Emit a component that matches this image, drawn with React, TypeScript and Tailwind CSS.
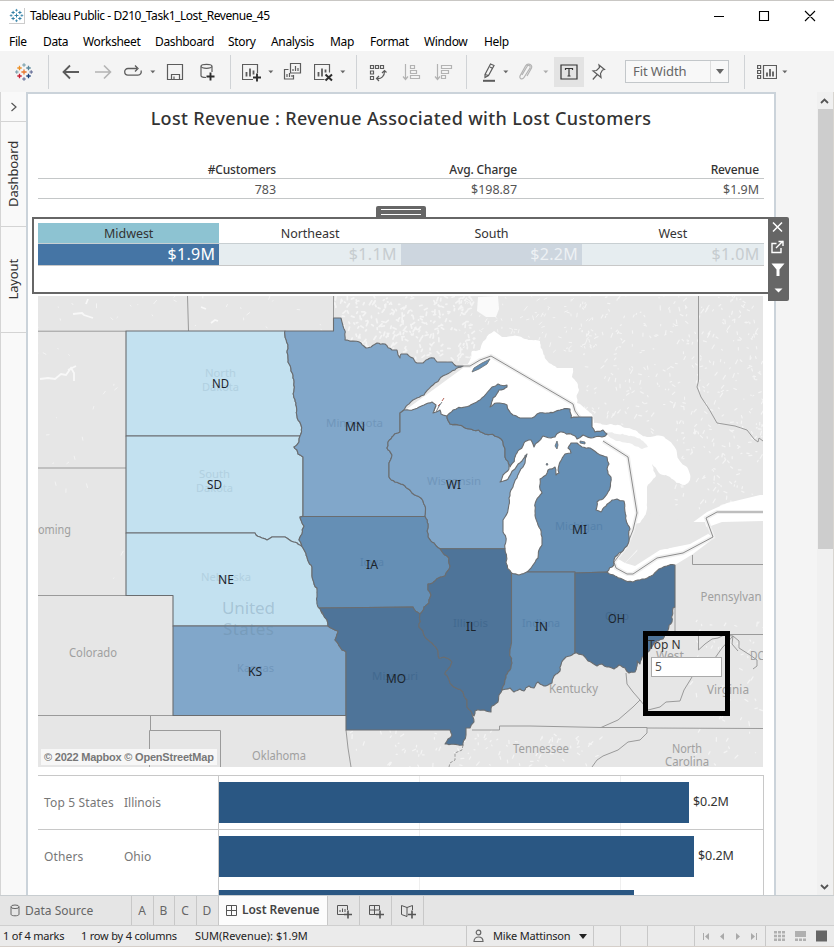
import React from "react";

type Kids = { children?: React.ReactNode; className?: string };

/* 20px toolbar glyph */
const Icon = ({ children, className = "" }: Kids) => (
  <svg width="20" height="20" viewBox="0 0 20 20" fill="none" stroke="#5c5c5c" strokeWidth="1.2" className={"shrink-0 " + className}>
    {children}
  </svg>
);

const Caret = ({ className = "" }: Kids) => (
  <svg width="6" height="4" viewBox="0 0 6 4" className={"shrink-0 " + className}>
    <path d="M0.3 0.5H5.3L2.8 3.3Z" fill="#666" />
  </svg>
);

const Sep = ({ className = "" }: Kids) => <div className={"h-[34px] w-px shrink-0 bg-[#d0d3d6] " + className} />;

const plus = (x: number, y: number, r: number) => `M${x - r} ${y}h${2 * r}M${x} ${y - r}v${2 * r}`;

function Logo({ size, mono }: { size: number; mono?: boolean }) {
  const c = mono
    ? ["#2f7fa5", "#2f7fa5", "#2f7fa5", "#2f7fa5", "#2f7fa5", "#2f7fa5", "#2f7fa5"]
    : ["#e8762d", "#eb9129", "#59879b", "#c72035", "#1f447e", "#5b6591", "#7099a6"];
  return (
    <svg width={size} height={size} viewBox="0 0 20 20" fill="none" className="shrink-0">
      <path d={plus(10, 10, 2.6)} stroke={c[0]} strokeWidth="1.3" />
      <path d={plus(5.5, 6, 2.2)} stroke={c[1]} strokeWidth="1.3" />
      <path d={plus(14.5, 6, 2.2)} stroke={c[2]} strokeWidth="1.3" />
      <path d={plus(5.5, 14, 2.2)} stroke={c[3]} strokeWidth="1.3" />
      <path d={plus(14.5, 14, 2.2)} stroke={c[4]} strokeWidth="1.3" />
      <path d={plus(10, 3, 1.8) + plus(2.8, 10, 1.8)} stroke={c[6]} strokeWidth="1" />
      <path d={plus(10, 17, 1.8) + plus(17.2, 10, 1.8)} stroke={c[5]} strokeWidth="1" />
    </svg>
  );
}

const menus: [string, string][] = [
  ["File", "w-[34px]"],
  ["Data", "w-[40px]"],
  ["Worksheet", "w-[72px]"],
  ["Dashboard", "w-[73px]"],
  ["Story", "w-[43px]"],
  ["Analysis", "w-[59px]"],
  ["Map", "w-[40px]"],
  ["Format", "w-[54px]"],
  ["Window", "w-[60px]"],
  ["Help", "w-[40px]"],
];

function TitleBar() {
  return (
    <div className="flex h-[31px] items-center border-t border-[#c9c7c4] bg-white pl-[9px] font-['Noto_Sans',sans-serif]">
      <div className="border-r border-b border-[#ccc]"><Logo size={15} mono /></div>
      <span className="ml-[5px] whitespace-nowrap text-[12px] tracking-[-0.450px] text-black">Tableau Public - D210_Task1_Lost_Revenue_45</span>
      <svg width="120" height="16" viewBox="0 0 120 16" fill="none" stroke="#000" strokeWidth="1.1" className="mr-[10px] ml-auto">
        <path d="M10 8.500h10M55.500 3.500h9v9h-9zM101 3l10 10M111 3l-10 10" />
      </svg>
    </div>
  );
}

function MenuBar() {
  return (
    <div className="flex h-[20px] items-center bg-white pt-[2px] pl-[9px] font-['Noto_Sans',sans-serif] text-[12px] tracking-[-0.350px] text-black">
      {menus.map(([m, w]) => (
        <span key={m} className={"shrink-0 " + w}>{m}</span>
      ))}
    </div>
  );
}

function Toolbar() {
  return (
    <div className="flex h-[41px] items-center bg-[#f4f4f4] pl-[14px]">
      <Logo size={20} />
      <Sep className="ml-[14px]" />
      <Icon className="ml-[12px]"><path d="M18 10H3M9 3.500L2.500 10L9 16.500" strokeWidth="1.8" /></Icon>
      <Icon className="ml-[12px]"><path d="M2 10H17M11 3.500L17.500 10L11 16.500" stroke="#b3b3b3" strokeWidth="1.6" /></Icon>
      <Icon className="ml-[10px]"><path d="M14 6.500H5a3.300 3.300 0 0 0 0 6.600h10a3.300 3.300 0 0 0 3-4.600M12 3.500L15 6.500L12 9.500" strokeWidth="1.3" /></Icon>
      <Caret className="ml-[7px]" />
      <Icon className="ml-[9px]"><path d="M2.500 2.500h15v15h-15zM6.500 17.500v-5h8v5M9 14.500v3" /></Icon>
      <Icon className="ml-[12px]">
        <path d="M9 15.500c-3 0-5-.8-5-2V4.500M15 10V4.500" />
        <ellipse cx="9.500" cy="4.300" rx="5.500" ry="2" />
        <path d="M9.500 14.500h8M13.500 10.500v8" stroke="#2e2e2e" strokeWidth="1.900" />
      </Icon>
      <Sep className="ml-[13px]" />
      <Icon className="ml-[11px]">
        <path d="M15.500 11V2.500h-15v15H11" />
        <path d="M4.500 14.500V10M8 14.500V6.500M11.500 12.500V8.500" strokeWidth="1.8" />
        <path d="M11 15.500h8M15 11.500v8" stroke="#2e2e2e" strokeWidth="1.900" />
      </Icon>
      <Caret className="ml-[6px]" />
      <Icon className="ml-[8px]">
        <path d="M8.500 1.500h10v9.500h-10zM6.500 7.500H2.500v9.500h9v-4" />
        <path d="M11 9V7M13.500 9V4M16 9V6M5 15v-3M7.500 15v-4M10 15v-2" />
      </Icon>
      <Icon className="ml-[12px]">
        <path d="M15.500 10.500V2.500h-15v15H10.500" />
        <path d="M4.500 14.500V10M8 14.500V6.500M11.500 10.500V7.500" strokeWidth="1.8" />
        <path d="M11.500 12.500l6.500 6M18 12.500l-6.500 6" stroke="#2e2e2e" strokeWidth="2" />
      </Icon>
      <Caret className="ml-[6px]" />
      <Sep className="ml-[10px]" />
      <Icon className="ml-[11px]">
        <path d="M2.500 3.500h3v3h-3zM7.500 3.500h3v3h-3zM12.500 3.500h3v3h-3zM2.500 9h3v3h-3zM2.500 14.500h3v3h-3z" />
        <path d="M9 16.500c4.500 .5 7.500-2.500 7.500-7M11 14L8.500 16.500L11 19M14 11l2.500-2.500l2 2" />
      </Icon>
      <Icon className="ml-[13px]"><path d="M4.500 2v15M2 14.500l2.500 3l2.500-3M9.500 3.500h4v3h-4zM9.500 8.500h6v3h-6zM9.500 13.500h9v3h-9z" stroke="#b3b3b3" /></Icon>
      <Icon className="ml-[12px]"><path d="M4.500 2v15M2 14.500l2.500 3l2.500-3M8.500 3.500h10v3h-10zM8.500 8.500h7v3h-7zM8.500 13.500h4v3h-4z" stroke="#b3b3b3" /></Icon>
      <Sep className="ml-[13px]" />
      <Icon className="ml-[12px]"><path d="M6 12.500L11.500 2l3.500 1.500L9.500 13.500L6 15.500zM6 12.500l3.500 1M11 5l2.500 1.300" /><path d="M4 18.800h12" strokeWidth="2" /></Icon>
      <Caret className="ml-[4px]" />
      <Icon className="ml-[7px]"><path d="M6 13l5-8.500c1-2 4-1 3 1.500l-6 9.500c-1.500 2.500-5 1.500-4-1.500l5.500-10c2-3.500 7.500-1.500 6 2L11 14" stroke="#b3b3b3" /></Icon>
      <Caret className="ml-[7px] opacity-50" />
      <div className="ml-[5px] flex h-[30px] w-[30px] shrink-0 items-center justify-center bg-[#e3e3e3]">
        <svg width="18" height="16" viewBox="0 0 18 16" fill="none" stroke="#333" strokeWidth="1.200">
          <path d="M1 1h16v14H1zM5.500 6V4.500h7V6M9 4.500v7.500M7.500 12h3" />
        </svg>
      </div>
      <Icon className="ml-[4px]"><path d="M11 3l5.500 4.500l-2 .5l-2 3.500l.5 4L9.500 12.500L5 9l3.500-.5l3-3zM9.300 12.500l-4.500 5" /></Icon>
      <div className="ml-[17px] flex h-[23px] w-[104px] shrink-0 items-center border border-[#c3c7ca] bg-[#f8f8f8]">
        <span className="w-[84px] pl-[7px] font-['Noto_Sans',sans-serif] text-[13px] tracking-[-0.100px] text-[#666]">Fit Width</span>
        <div className="flex h-full flex-1 items-center justify-center border-l border-[#ddd]">
          <svg width="8" height="5" viewBox="0 0 8 5"><path d="M0 0h8L4 5z" fill="#666" /></svg>
        </div>
      </div>
      <Sep className="ml-[15px]" />
      <Icon className="ml-[12px]">
        <path d="M.6 3.500h3v3h-3zM.6 8.500h3v3h-3zM.6 13.500h3v3h-3zM6.500 3.500h13v13h-13z" />
        <path d="M10 14.500v-4M13 14.500V7M16 14.500v-5" strokeWidth="1.800" />
      </Icon>
      <Caret className="ml-[5px]" />
    </div>
  );
}

const A = "#c3e1f0";
const B = "#81a7ca";
const C = "#658fb5";
const D = "#4e7499";

const states: [string, string][] = [
  [A, "126,331 285,331 288,345 287,352 288,362 291,371 293,378 294,390 296,403 297,416 301,425 300,436 126,436"],
  [A, "126,436 300,436 299,442 294,447 298,454 303,457 303,516 300,517 304,526 302,534 299,540 303,548 297,543 291,541 285,537 272,537 267,540 262,538 255,533 126,533"],
  [A, "126,533 255,533 262,538 267,540 272,537 285,537 291,541 297,543 303,548 307,557 312,567 312,576 317,588 318,600 321,611 327,620 328,626 173,626 173,595.5 126,595.5"],
  [B, "173,626 328,626 333,629 338,631 335,640 340,647 342,650 346,652 346,715.500 173,715.500"],
  [B, "285,331 333.500,331 333.500,318 341,318 343,326 345,340 353,341 361,343 366,348 371,347 377,343 385,344 392,350 397,350 400,358 401,354 407,354 413,358 417,363 423,363 426,360 434,358 437,362 452,362 456,366 463,366 455,370 445,375 433,385 424,395 413,400 404,410 400,413 400,432 392,437 388,442 387,448 392,455 389,463 389,477 395,482 405,486 412,493 423,501 425,516.500 303,516.500 303,457 298,454 294,447 299,442 300,436 301,425 297,416 296,403 294,390 293,378 291,371 288,362 287,352 288,345"],
  [B, "404,410 415,409 424,405 432,402 436,405 433,413 440,410 441,414 447,416 450,424 470,429 485,434 498,437 503,442 505,449 505,457 509,463 509,469 503,475 500,482 508,479 515,469 522,461 527,454 524,465 517,478 513,487 509,498 508,510 503,520 503,532 506,541 505,548.700 440,548.700 434,543 428,537 427,531 428,524 425,516.500 423,501 412,493 405,486 395,482 389,477 389,463 392,455 387,448 388,442 392,437 400,432 400,413"],
  [C, "447,416 453,410 465,407 480,400 486,394 492,387 498,384 507,385 507,387 499,390 493,398 490,407 497,403 507,405 513,415 520,418 532,418 537,414 547,413 560,410 570,409 571,418 580,417 592,417 592,427 595,432 603,430 607,434 602,437 583,435 577,439 571,434 560,432 555,437 543,436 538,442 534,447 531,440 524,443 517,453 510,467 505,457 505,449 503,442 498,437 485,434 470,429 450,424"],
  [C, "527,572 533,565 538,558 542,545 542,537 538,525 535,511 536,501 542,493 540,479 546,475 548,470 555,467 556,475 559,473 560,462 565,454 571,453 568,448 571,443 577,443 582,447 590,448 597,453 607,457 609,464 607,469 611,477 610,488 607,494 603,499 597,502 596,510 601,512 606,506 612,500 617,499 624,501 626,516 630,529 629,540 627,546 619,553 615,557 614,565 607,572 575,573 575,572"],
  [C, "303,516.500 425,516.500 428,524 427,531 428,537 434,543 440,548.700 443,553 449,558 450,566 445,576 435,581 428,584 428,590 431,595 429,603 424,607 420,614 413,607 319,608 317,597 317,588 312,576 312,567 307,557 303,548 299,540 302,534 304,526 300,517"],
  [D, "319,608 413,607 420,614 419,627 425,637 432,643 437,649 439,658 444,657 452,662 450,667 445,674 450,683 456,688 463,692 467,700 467,707 472,713 474,722 470,728 466,728 466,735 463,745 445,744 448,739 452,735 450,730 346,730 346,652 342,650 340,647 335,640 338,631 333,629 328,626 327,620"],
  [D, "440,548.700 505,548.700 506,562 511.500,573 511.500,643 510,650 512,663 508,672 505,680 502,690 499,695 498,702 492,706 491,712 486,711 482,710 475,711 474,716 472,713 467,707 467,700 463,692 456,688 450,683 445,674 450,667 452,662 444,657 439,658 437,649 432,643 425,637 419,627 420,614 424,607 429,603 431,595 428,590 428,584 435,581 445,576 450,566 449,558 443,553"],
  [C, "511.500,573 519,575 527,572 575,572 575,653 572,655 566,657 561,665 560,671 554,676 552,683 548,685 544,686 538,682 534,688 529,686 524,691 520,689 514,692 510,688 502,690 505,680 508,672 512,663 510,650 511.500,643"],
  [D, "575,573 607,572 615,576 622,579 633,582 645,579 651,576 659,569 675,565 675,607 673,608 672,622 668,630 663,639 653,645 648,652 642,657 640,664 637,661 635,672 629,673 625,668 619,665 614,669 607,667 602,664 597,666 588,661 583,655 577,653 575,653"],
];

/* Adds small bends to natural borders. The offset depends only on the two
   end points together, so states that share a border stay flush. */
function roughen(points: string) {
  const p = points.split(" ").map((q) => q.split(",").map(Number));
  const bend = (a: number[], b: number[]): number[][] => {
    const dx = b[0] - a[0];
    const dy = b[1] - a[1];
    const len = Math.hypot(dx, dy);
    if (dx === 0 || dy === 0 || len < 3.5 || len > 30) return [];
    const s = a[0] + b[0];
    const t = a[1] + b[1];
    const k = len * 0.1;
    const m = [s / 2 + Math.sin(s * 12.9 + t * 7.3) * k, t / 2 + Math.cos(s * 5.1 + t * 9.7) * k];
    return [...bend(a, m), m, ...bend(m, b)];
  };
  return p
    .flatMap((a, i) => [a, ...bend(a, p[(i + 1) % p.length])])
    .map((q) => q[0].toFixed(1) + "," + q[1].toFixed(1))
    .join(" ");
}

/* small lakes scattered over the base map */
function speckle(seed: number, n: number, x0: number, y0: number, w: number, h: number) {
  let s = seed;
  const r = () => {
    s = (s * 16807) % 2147483647;
    return s / 2147483647;
  };
  let d = "";
  for (let i = 0; i < n; i++) {
    const x = x0 + r() * w;
    const y = y0 + r() * h;
    d += `M${x.toFixed(1)} ${y.toFixed(1)}l${(r() * 4 - 1).toFixed(1)} ${(r() * 6 - 4).toFixed(1)}`;
  }
  return d;
}

const baseLabels: [string, number, number, number][] = [
  ["oming", 38, 534, 33],
  ["Colorado", 69, 657, 48],
  ["Oklahoma", 252, 759.5, 54],
  ["Kentucky", 549, 693, 49],
  ["Tennessee", 513, 752.5, 56],
  ["North", 672, 752.5, 30],
  ["Carolina", 665, 766, 44],
  ["Virginia", 707, 693.5, 42],
  ["Pennsylvan", 700.5, 600.5, 61],
  ["West", 656, 660, 28],
  ["DC", 750, 660, 14],
];

const faintLabels: [string, number, number, number, string][] = [
  ["North", 205, 377, 31, "#b1d0e0"],
  ["Dakota", 202, 391, 37, "#b1d0e0"],
  ["South", 199, 478, 31, "#b1d0e0"],
  ["Dakota", 196, 492, 37, "#b1d0e0"],
  ["Nebraska", 201, 581, 50, "#b1d0e0"],
  ["Kansas", 237, 672, 37, "#7096ba"],
  ["Minnesota", 326, 427, 57, "#7096ba"],
  ["Wisconsin", 427, 485, 54, "#7096ba"],
  ["Iowa", 360, 566, 24, "#5682ab"],
  ["Missouri", 372, 679.5, 46, "#42698f"],
  ["Illinois", 453, 627, 35, "#42698f"],
  ["Indiana", 522, 627, 38, "#5682ab"],
  ["Michigan", 555, 530, 48, "#5682ab"],
  ["Ohio", 605, 620, 24, "#42698f"],
];

const codes: [string, number, number, number][] = [
  ["ND", 212, 388, 17],
  ["SD", 207, 489, 15],
  ["NE", 218, 584, 16],
  ["KS", 248, 676, 14],
  ["MN", 345, 431, 20],
  ["WI", 446, 489, 15],
  ["IA", 366, 569, 12],
  ["MO", 386, 683, 20],
  ["IL", 466, 631, 10],
  ["IN", 535, 631, 13],
  ["MI", 572, 534, 15],
  ["OH", 608, 623, 17],
];

const usCanada = "463,366 470,366 480,360 491,356 573,404 575,411 580,418";
const huronErie = "603,441 628,457 637,513 633,530 627,545 614,562 616,568 627,574 633,574 657,558 683,553 713,537 709,526 706,518 717,512 763,512";

function LostRevenueMap() {
  return (
    <svg width="725" height="471" viewBox="38 296 725 471" className="block bg-[#e6e6e6] font-['Noto_Sans',sans-serif] text-[12px]">
      <g fill="none" stroke="#f4f4f4" strokeLinecap="round">
        <path d={speckle(77, 300, 335, 296, 140, 70)} strokeWidth="1.700" />
        <path d={speckle(12, 110, 460, 296, 130, 60)} strokeWidth="1" />
        <path d={speckle(31, 330, 580, 296, 183, 140)} strokeWidth="1.100" />
        <path d={speckle(59, 100, 675, 420, 88, 90)} strokeWidth="1.200" />
        <path d={speckle(45, 25, 38, 296, 290, 34)} strokeWidth="1" />
        <path d={speckle(8, 20, 38, 340, 85, 250)} strokeWidth="0.900" />
        <path d={speckle(99, 90, 350, 732, 250, 35)} strokeWidth="1.200" />
        <path d={speckle(201, 60, 690, 620, 73, 147)} strokeWidth="1.200" />
      </g>
      <path d="M40 379l8-1l7 1l6-5l5 1l5-7l3 5v8M68 370l8-4M73 314l9-1l2 2l9 3M86 304l2-5M211 323l4-3l3 1M201 307l5 2" stroke="#f8f8f8" strokeWidth="1.800" fill="none" />
      <path d="M478 297l20-1l1 13l-3 8l-10 0l-9-6z" fill="#fafafa" />
      {/* Great Lakes */}
      <g fill="#fff">
        <path d={"M" + roughen("463,368 470,360 472,351 480,350 485,340 494,331 502,337 513,336 525,339 540,341 543,352 549,363 557,368 573,368 572,377 579,390 577,403 592,414 594,423 610,424 627,428 647,437 662,436 673,445 687,467 690,480 685,485 670,477 657,470 652,464 656,476 647,487 647,502 640,523 630,530 619,553 590,545").split(" ").join("L") + "L500 585L500 450L440 420L400 414Z"} />
        <path d="M607 572L615 557L625 563L637 550L650 546L667 549L690 540L703 530L714 538L693 554L675 565L660 580L620 584Z" />
        <path d="M692 523L707 512L727 503L760 495L763 495V521L722 522L708 527Z" />
      </g>
      <path d="M625 563L637 551L640 543L639 526L647 513L690 522L705 522L708 534L690 544L660 550L635 566Z" fill="#e6e6e6" />
      <path d={"M" + roughen("606,432 617,434 629,436 643,441 648,447 642,449 629,443 613,439").split(" ").join("L") + "Z"} fill="#ececec" />
      <g fill="none" stroke="#f0f0f0" strokeWidth="4"><polyline points={usCanada} /><polyline points={huronErie} /></g>
      {/* outlines of the neighbouring states and provinces */}
      <g fill="none" stroke="#9a9a9a" strokeWidth="1">
        <path d="M187.500 296L188.500 331M38 331.200H126M38 468H126M38 595.500H126M38 715.500H173M150.500 716V730M149.500 767V730.500H220.500V767M333.500 296V331" />
        <path d="M346 730L348 748L351 767M472 730H499.500V726H530L601 727.500H647V733L640 740L628 742L618 750L603 756L597 760L592 767M647 728L763 728.500" />
        <path d="M601 727.500L618 720L633 707L640 700L648 710L660 707L666 702L680 701L684 690L692 677L697 670L708 665L715 658L722 648L733 636" />
        <path d="M626 673L627 684L633 692L640 700M675 607V634.500H763M692.500 555V564.500H763M698.500 636V650L705 644L712 639L718 638L724 635L733 636L739 641L739 648L750 655L757 660L757 666L753 669M733 636L732 644L738 651" />
        <path d="M698.500 296V381L697 387L701 397L709 409L717 423L735 426L747 430L754 439L758 442L759 438L763 441" />
        <path d="M463 745L462 750L455 753L455 760L450 763L449 767" strokeDasharray="3 1.500" />
        <polyline points={usCanada} stroke="#8c8c8c" />
        <polyline points={huronErie} stroke="#8c8c8c" />
      </g>
      <g stroke="#6a6d70" strokeWidth="1.100" strokeLinejoin="round">
        {states.map(([fill, pts], i) => <polygon key={i} points={roughen(pts)} fill={fill} />)}
      </g>
      {/* islands */}
      <g fill={C} stroke="#6a6d70" strokeWidth="0.800">
        <path d="M472 372L474 368L482 363L490 359L487 364L479 369Z" />
        <path d="M557 441l1 4l-1 4l-2-3zM547 463l1 2l-2 0zM525 455l2 1l-2 1zM580 441l5 1l0 2l-5-1zM436 412l3-6l3-4M434 411l2-5" />
      </g>
      <path d="M438 406l2-2M442 401l2-3" stroke="#b5655a" fill="none" />
      <g fill="#a0a0a0">
        {baseLabels.map(([t, x, y, w]) => <text key={t} x={x} y={y} textLength={w} lengthAdjust="spacingAndGlyphs">{t}</text>)}
      </g>
      <g fontSize="11.500">
        {faintLabels.map(([t, x, y, w, c], i) => <text key={i} x={x} y={y} fill={c} textLength={w} lengthAdjust="spacingAndGlyphs">{t}</text>)}
      </g>
      <g fontSize="17" fill="#5f8098" fillOpacity="0.300">
        <text x="222" y="614" textLength="53">United</text>
        <text x="223" y="635" textLength="51">States</text>
      </g>
      <g fontSize="13" fill="#1c242c">
        {codes.map(([t, x, y, w]) => <text key={t} x={x} y={y} textLength={w} lengthAdjust="spacingAndGlyphs">{t}</text>)}
      </g>
    </svg>
  );
}

const regions: [string, string, string, string][] = [
  ["Midwest", "$1.9M", "bg-[#8dc3d2]", "bg-[#4575a5] text-white"],
  ["Northeast", "$1.1M", "", "bg-[#e6edf0] text-[#c6cccf]"],
  ["South", "$2.2M", "", "bg-[#cdd6df] text-[#edf1f4]"],
  ["West", "$1.0M", "", "bg-[#e6edf0] text-[#c6cccf]"],
];

function SelectedZone() {
  return (
    <div className="relative ml-[-6px] h-[77px] w-[738px] border-2 border-[#666] pt-1 pl-1">
      <div className="flex w-[726px] border-b border-[#c8c8c8]">
        {regions.map(([name, val, head, cell]) => (
          <div key={name} className="w-[181.400px] shrink-0">
            <div className={"h-[21px] border-b border-[#c8cfd2] text-center text-[12.500px] leading-[21px] tracking-[-0.050px] text-[#333] " + head}>{name}</div>
            <div className={"h-[21px] pr-[4px] text-right text-[16px] leading-[21px] tracking-[0.350px] " + cell}>{val}</div>
          </div>
        ))}
      </div>
      <div className="absolute top-[-13px] left-[342px] flex h-[12px] w-[50px] flex-col gap-[4px] rounded-t-[2px] bg-[#666] px-[5px] pt-[3px]">
        <div className="h-px bg-white" />
        <div className="h-px bg-white" />
      </div>
      <div className="absolute top-[-2px] left-[734px] h-[84px] w-[21px] rounded-r-[2px] bg-[#666]">
        <svg width="21" height="84" viewBox="0 0 21 84" fill="none" stroke="#fff" strokeWidth="1.500">
          <path d="M5 5.500l9 9M14 5.500l-9 9" />
          <path d="M8.500 26.500h-4.500v9h9v-4.500M8 31l7-7M10.500 24.500h4.500v4.500" strokeWidth="1.400" />
          <path d="M3.500 46.500h13l-5 6v6.500h-3v-6.500z" fill="#fff" stroke="none" />
          <path d="M6.500 71.500h8l-4 4z" fill="#fff" stroke="none" />
        </svg>
      </div>
    </div>
  );
}

const bars: [string, string, string, string][] = [
  ["Top 5 States", "Illinois", "w-[470px]", "$0.2M"],
  ["Others", "Ohio", "w-[475px]", "$0.2M"],
];

function BarChart() {
  return (
    <div className="relative mt-[8px] flex h-[120px] w-[726px] flex-col overflow-hidden border-t border-r border-[#c8c8c8]">
      {/* value gridlines behind the bars */}
      <div className="absolute inset-y-0 left-[381px] w-[202px] border-x border-[#efefef]" />
      {bars.map(([group, state, w, v], i) => (
        <div key={state} className={"relative flex shrink-0 items-center text-[12px] " + (i === 0 ? "h-[54px] border-b border-[#c8c8c8]" : "h-[53px]")}>
          <span className="w-[80px] pl-[6px] tracking-[0.150px] whitespace-nowrap text-[#777]">{group}</span>
          <span className="w-[100px] pl-[6px] text-[#777]">{state}</span>
          <div className="flex h-full flex-1 items-center border-l border-[#c8c8c8]">
            <div className={"h-[41px] bg-[#2a5783] " + w} />
            <span className="pl-[4px] text-[12.500px] tracking-[-0.050px] text-[#333]">{v}</span>
          </div>
        </div>
      ))}
      <div className="relative flex h-[13px] shrink-0 pl-[180px]">
        <div className="h-full flex-1 border-l border-[#c8c8c8] pt-[7px]">
          <div className="h-[10px] w-[415px] bg-[#2a5783]" />
        </div>
      </div>
    </div>
  );
}

function Dashboard() {
  return (
    <div className="h-[803px] w-[750px] shrink-0 overflow-visible border-x-2 border-t-2 border-[#cbd3da] bg-white pl-[10px] font-['Noto_Sans',sans-serif]">
      <div className="flex h-[48px] w-[726px] items-center justify-center whitespace-nowrap text-[18px] font-medium tracking-[0.360px] text-[#333]">
        Lost Revenue : Revenue Associated with Lost Customers
      </div>
      <div className="mt-[16px] grid w-[726px] grid-cols-[238px_241px_242px_5px] text-right text-[12px] text-[#333]">
        <div className="col-span-4 grid h-[21px] grid-cols-subgrid items-center border-b border-[#c4c7c8] pt-[3px] font-medium tracking-[-0.150px]">
          <span>#Customers</span><span>Avg. Charge</span><span>Revenue</span>
        </div>
        <div className="col-span-4 grid h-[20px] grid-cols-subgrid items-center border-b border-[#c4c7c8] pt-[2px] text-[12.500px] tracking-[-0.050px] text-[#555]">
          <span>783</span><span>$198.87</span><span>$1.9M</span>
        </div>
      </div>
      <div className="h-[18px]" />
      <SelectedZone />
      <div className="relative mt-[2px] h-[471px] w-[725px]">
        <LostRevenueMap />
        <div className="absolute bottom-[2px] left-[3px] h-[16px] bg-[#f7f7f7] px-[3px] font-['Liberation_Sans',sans-serif] text-[11px] leading-[16px] font-bold tracking-[-0.210px] whitespace-nowrap text-[#777]">
          © 2022 Mapbox © OpenStreetMap
        </div>
        <div className="absolute top-[335px] left-[605px] h-[85px] w-[87px] border-[5px] border-black">
          <div className="h-[21px] pt-px text-[12px] leading-[16px] text-[#333]">Top N</div>
          <div className="ml-[3px] h-[20px] w-[71px] border border-[#aaa] bg-white pl-[3px] text-[12px] leading-[18px] text-[#555]">5</div>
        </div>
      </div>
      <BarChart />
    </div>
  );
}

function SidePane() {
  return (
    <div className="flex w-[26px] shrink-0 flex-col border-l border-[#d5d5d5] bg-[#f9f9f9] font-['Noto_Sans',sans-serif] text-[13px] tracking-[-0.150px] text-[#333]">
      <div className="flex h-[30px] items-center justify-center border-b border-[#d4d4d4]">
        <svg width="8" height="10" viewBox="0 0 8 10" fill="none" stroke="#555" strokeWidth="1.200"><path d="M1.500 1L6 5L1.500 9" /></svg>
      </div>
      <div className="flex h-[105px] items-center justify-center border-b border-[#d4d4d4]">
        <span className="rotate-180 [writing-mode:vertical-rl]">Dashboard</span>
      </div>
      <div className="flex h-[106px] items-center justify-center border-b border-[#d4d4d4]">
        <span className="rotate-180 [writing-mode:vertical-rl]">Layout</span>
      </div>
    </div>
  );
}

function ScrollBar() {
  return (
    <div className="ml-auto flex w-[17px] flex-col items-center border-r border-[#d8d5d0] bg-[#f0f0f0]">
      <svg width="16" height="17" viewBox="0 0 16 17" fill="none" stroke="#555" strokeWidth="1.800"><path d="M4 11L7.500 7.500L11 11" /></svg>
      <div className="h-[440px] w-[15px] bg-[#cdcdcd]" />
      <svg width="16" height="17" viewBox="0 0 16 17" fill="none" stroke="#555" strokeWidth="1.800" className="mt-auto"><path d="M4 7L7.500 10.500L11 7" /></svg>
    </div>
  );
}

const SheetIcon = ({ children }: Kids) => (
  <div className="flex w-[32px] shrink-0 items-center justify-center border-r border-[#c8c8c8]">
    <svg width="16" height="16" viewBox="0 0 16 16" fill="none" stroke="#555" strokeWidth="1">
      {children}
      <path d="M8 11.500h8M12 7.500v8" strokeWidth="1.600" />
    </svg>
  </div>
);

function SheetTabs() {
  const letter = "flex shrink-0 items-center justify-center border-r border-[#c8c8c8] ";
  return (
    <div className="flex h-[30px] border-t border-[#c8cdd0] bg-[#e5e5e5] font-['Noto_Sans',sans-serif] text-[12px] text-[#666]">
      <div className="flex w-[132px] shrink-0 items-center border-r border-[#c8c8c8] pl-[10px]">
        <svg width="10" height="13" viewBox="0 0 10 13" fill="none" stroke="#666"><ellipse cx="5" cy="2.800" rx="4" ry="1.800" /><path d="M1 2.800v7.500c0 2 8 2 8 0V2.800" /></svg>
        <span className="ml-[5px]">Data Source</span>
      </div>
      <div className={letter + "w-[22px] pr-px"}>A</div>
      <div className={letter + "w-[21px] pr-px"}>B</div>
      <div className={letter + "w-[22px] pr-px"}>C</div>
      <div className={letter + "w-[22px] pr-px"}>D</div>
      <div className="flex w-[109px] shrink-0 items-center border-r border-[#c8c8c8] bg-[#fcfcfc] pb-px pl-[7px] font-semibold text-[#444]">
        <svg width="11" height="11" viewBox="0 0 11 11" fill="none" stroke="#555"><path d="M.5.500h10v10H.5zM5.500.500v10M.5 5.500h10" /></svg>
        <span className="ml-[5px] tracking-[-0.070px] whitespace-nowrap">Lost Revenue</span>
      </div>
      <SheetIcon><path d="M11.500 7V2.500H1.500v9H8M4 9V7M6.500 9V5.500M9 9V6" /></SheetIcon>
      <SheetIcon><path d="M11.500 7V2.500H1.500v9H8M6.500 2.500v9M1.500 7h10" /></SheetIcon>
      <SheetIcon><path d="M12.500 7V2.500L7 4.500L1.500 2.500v9L7 13.500V4.500" /></SheetIcon>
    </div>
  );
}

function StatusBar() {
  const cell = "h-full shrink-0 border-r border-[#c8c8c8] ";
  return (
    <div className="flex h-[22px] items-center border-t border-b border-[#cfcfcf] border-b-[#d5cfca] bg-[#ebebeb] font-['Noto_Sans',sans-serif] text-[11px] whitespace-nowrap text-[#222]">
      <span className="w-[81px] pl-[3px] tracking-[-0.200px]">1 of 4 marks</span>
      <span className="w-[114px] tracking-[-0.200px]">1 row by 4 columns</span>
      <span className="w-[271px]">SUM(Revenue): $1.9M</span>
      <div className="flex h-full w-[128px] shrink-0 items-center border-x border-[#c8c8c8] pl-[6px]">
        <svg width="11" height="14" viewBox="0 0 11 14" fill="none" stroke="#666" strokeWidth="1.200"><circle cx="5.500" cy="3.500" r="2.300" /><path d="M1 12.500c0-6 9-6 9 0z" /></svg>
        <span className="ml-[9px] w-[86px] tracking-[-0.200px]">Mike Mattinson</span>
        <svg width="8" height="5" viewBox="0 0 8 5"><path d="M0 0h8L4 5z" fill="#222" /></svg>
      </div>
      <div className={cell + "w-[27px]"} />
      <div className={cell + "w-[27px]"} />
      <div className={cell + "w-[47px]"} />
      <div className={cell + "flex w-[71px] items-center"}>
        <svg width="70" height="10" viewBox="0 0 70 10" fill="#aaa"><path d="M8 2h1v7H8zM14 2v7L10 5.500zM29 2v7L25 5.500zM41 2v7L45 5.500zM56 2v7L60 5.500zM61 2h1v7h-1z" /></svg>
      </div>
      <svg width="60" height="14" viewBox="0 0 60 14" className="ml-[6px] shrink-0" fill="#b0b0b0">
        <path d="M2 2h3v2.500H2zM6 2h3v2.500H6zM10 2h3v2.500h-3zM2 5.700h3v2.500H2zM6 5.700h3v2.500H6zM10 5.700h3v2.500h-3zM2 9.500h3V12H2zM6 9.500h3V12H6zM10 9.500h3V12h-3zM23 2h11v6H23zM23 9.500h3V12h-3zM27 9.500h3V12h-3zM31 9.500h3V12h-3z" />
        <path d="M44 1.500h11v11H44z" fill="#666" />
      </svg>
    </div>
  );
}

export default function App() {
  return (
    <div className="flex h-[947px] w-[834px] flex-col overflow-hidden bg-[#f4f4f4]">
      <TitleBar />
      <MenuBar />
      <Toolbar />
      <div className="flex h-[803px] shrink-0">
        <SidePane />
        <Dashboard />
        <ScrollBar />
      </div>
      <SheetTabs />
      <StatusBar />
    </div>
  );
}
